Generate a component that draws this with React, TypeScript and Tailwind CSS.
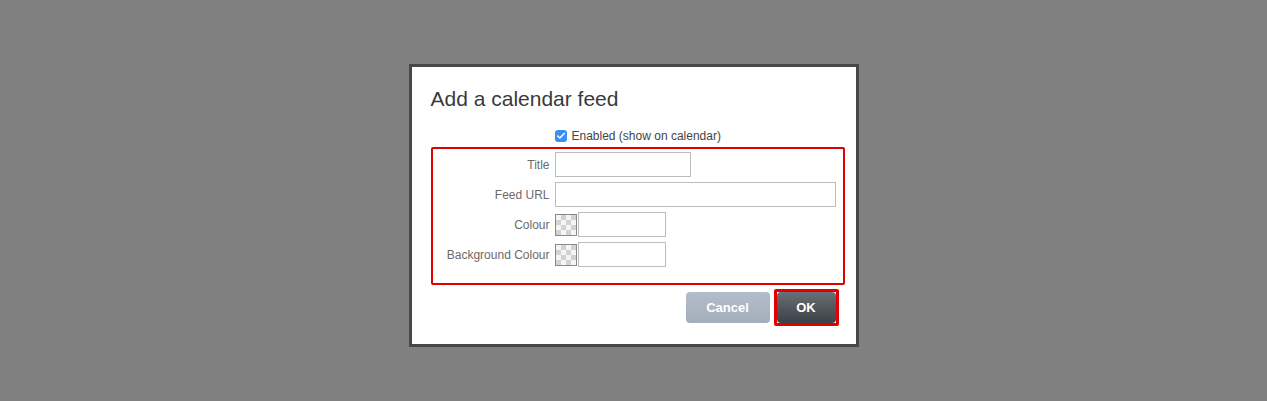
import { Check } from "lucide-react";

const fields = [
  { key: "title", label: "Title", width: "w-[136px]" },
  { key: "url", label: "Feed URL", width: "w-[281px]" },
  { key: "colour", label: "Colour", swatch: true },
  { key: "bg", label: "Background Colour", swatch: true },
];

const Swatch = () => (
  <div className="w-[22px] h-[22px] border border-[#8a8a8a] bg-[conic-gradient(#d2d2d2_25%,#f5f5f5_0_50%,#d2d2d2_0_75%,#f5f5f5_0)] bg-[length:10px_10px] bg-[position:0px_0px]" />
);

export default function App() {
  return (
    <div className="min-h-[401px] w-full bg-[#808080] pt-[64px] font-['Liberation_Sans',Arial,sans-serif]">
      <div className="mx-auto w-[450px] h-[283px] border-[3px] border-[#474747] bg-white flex flex-col">
        <h1 className="pl-[19px] pt-[20px] text-[21px] leading-[24px] text-[#3a3a3a] font-normal">
          Add a calendar feed
        </h1>

        <label className="mt-[17px] ml-[143px] flex items-center gap-[5px] h-[16px] text-[12px] text-[#444]">
          <span className="w-[12px] h-[12px] rounded-[3px] bg-[#3b8ff0] flex items-center justify-center">
            <Check className="w-[10px] h-[10px] text-white" strokeWidth={3.5} />
          </span>
          Enabled (show on calendar)
        </label>

        <div className="mt-[3px] ml-[19px] mr-[11px] border-2 border-[#e00000] rounded-[2px] pt-[3px] pb-[16px]">
          <div className="grid grid-cols-[117px_1fr] gap-x-[5px] gap-y-[5px]">
            {fields.map((f) => (
              <div key={f.key} className="contents">
                <span className="text-right text-[12px] text-[#6b6b6b] self-center">{f.label}</span>
                {f.swatch ? (
                  <div className="flex items-center gap-px">
                    <Swatch />
                    <input className="w-[88px] h-[25px] border border-[#bdbdbd] outline-none" />
                  </div>
                ) : (
                  <input className={`${f.width} h-[25px] border border-[#bdbdbd] outline-none`} />
                )}
              </div>
            ))}
          </div>
        </div>

        <div className="mt-[4px] pr-[17px] flex items-center justify-end gap-[4px]">
          <button className="w-[84px] h-[31px] rounded-[4px] bg-gradient-to-b from-[#b4bdca] to-[#a3aebd] text-white font-bold text-[13px]">
            Cancel
          </button>
          <div className="border-[3px] border-[#e00000] rounded-[2px]">
            <button className="w-[59px] h-[31px] rounded-[4px] bg-gradient-to-b from-[#6a6e75] to-[#3d4147] text-white font-bold text-[13px] block">
              OK
            </button>
          </div>
        </div>
      </div>
    </div>
  );
}
